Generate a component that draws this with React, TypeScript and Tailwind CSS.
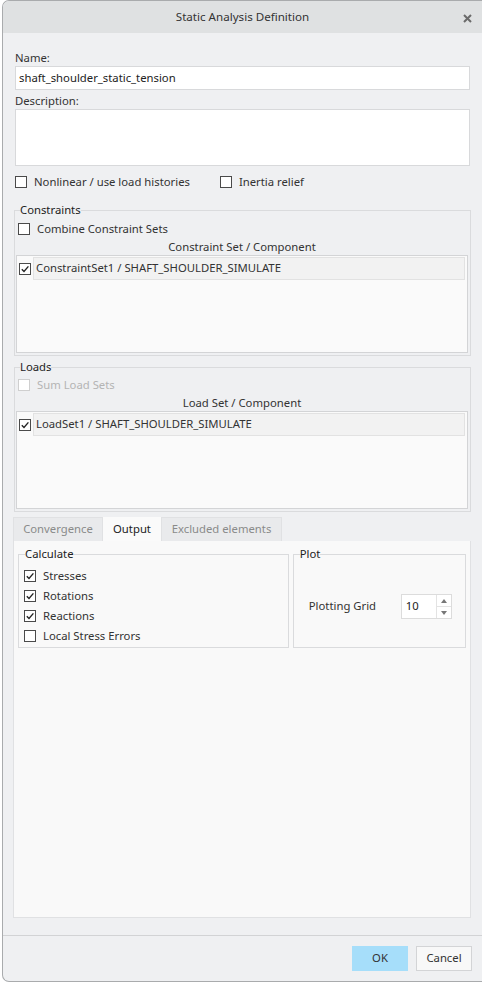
import type { ReactNode } from "react";

const font = { fontFamily: '"Noto Sans", "Open Sans", sans-serif' };

function Check({ checked, disabled }: { checked?: boolean; disabled?: boolean }) {
  return (
    <span
      className={[
        "flex h-[12px] w-[12px] shrink-0 items-center justify-center border bg-white",
        disabled ? "border-[#cfcfcf] bg-[#f3f3f3]" : "border-[#4a4a4a]",
      ].join(" ")}
    >
      {checked ? (
        <svg width="10" height="10" viewBox="0 0 10 10">
          <path d="M1.8 5.2 L4 7.4 L8.4 2.4" fill="none" stroke="#222" strokeWidth="1.4" />
        </svg>
      ) : null}
    </span>
  );
}

function CheckRow({
  label,
  checked,
  disabled,
  className = "",
}: {
  label: string;
  checked?: boolean;
  disabled?: boolean;
  className?: string;
}) {
  return (
    <div className={`flex h-[20px] items-center gap-[7px] ${className}`}>
      <Check checked={checked} disabled={disabled} />
      <span className={disabled ? "text-[#b4b4b4]" : "text-[#333]"}>{label}</span>
    </div>
  );
}

function Group({
  title,
  className = "",
  children,
}: {
  title: string;
  className?: string;
  children: ReactNode;
}) {
  return (
    <fieldset className={`border border-[#dadbdd] ${className}`}>
      <legend className="ml-[4px] leading-[16px] text-[#222]">{title}</legend>
      {children}
    </fieldset>
  );
}

function SetList({ header, row }: { header: string; row: string }) {
  return (
    <>
      <div className="flex h-[16px] items-center justify-center text-[#333]">{header}</div>
      <div className="h-[98px] border border-[#d3d4d6] bg-[#fafafa] px-[2px] pt-[1px]">
        <div className="flex items-center gap-[2px]">
          <Check checked />
          <div className="flex h-[23px] flex-1 items-center border border-[#e2e2e2] bg-[#f2f2f2] pl-[2px] text-[#333]">
            {row}
          </div>
        </div>
      </div>
    </>
  );
}

export default function App() {
  return (
    <div className="flex h-[983px] w-[482px] bg-white pl-[2px] text-[11.3px]" style={font}>
      <div className="flex h-[982px] flex-1 flex-col overflow-hidden rounded-l-[7px] border-y border-l border-[#a9abad] bg-[#eff0f2]">
        <div className="relative flex h-[32px] shrink-0 items-center justify-center bg-[#dfe1e2] text-[11.6px] text-[#333]">
          Static Analysis Definition
          <svg className="absolute right-[10px] top-[13px]" width="9" height="9" viewBox="0 0 9 9">
            <path d="M1 1 L8 8 M8 1 L1 8" stroke="#6b6b6b" strokeWidth="2" />
          </svg>
        </div>

        <div className="flex flex-1 flex-col pb-[17px] pl-[12px] pr-[12px]">
          <div className="mt-[17px] h-[16px] leading-[16px] text-[#333]">Name:</div>
          <div className="flex h-[24px] items-center border border-[#d8d9db] bg-white px-[3px] text-[#222]">
            shaft_shoulder_static_tension
          </div>
          <div className="mt-[3px] h-[16px] leading-[16px] text-[#333]">Description:</div>
          <div className="h-[57px] border border-[#d8d9db] bg-white" />

          <div className="mt-[6px] flex h-[20px] items-center">
            <CheckRow label="Nonlinear / use load histories" />
            <CheckRow label="Inertia relief" className="ml-[30px]" />
          </div>

          <Group title="Constraints" className="mt-[10px] ml-[-1px] mr-[-1px] pb-[2px] pl-[1px] pr-[2px]">
            <CheckRow label="Combine Constraint Sets" className="ml-[2px] mt-[1px]" />
            <SetList header="Constraint Set / Component" row="ConstraintSet1 / SHAFT_SHOULDER_SIMULATE" />
          </Group>

          <Group title="Loads" className="mt-[3px] ml-[-1px] mr-[-1px] pb-[2px] pl-[1px] pr-[2px]">
            <CheckRow label="Sum Load Sets" disabled className="ml-[2px]" />
            <SetList header="Load Set / Component" row="LoadSet1 / SHAFT_SHOULDER_SIMULATE" />
          </Group>

          <div className="mt-[5px] ml-[-2px] mr-[-1px] flex h-[24px] items-end">
            <div className="flex h-[24px] w-[90px] items-center justify-center border border-b-0 border-[#e0e1e3] bg-[#e9eaec] text-[#8a8a8a]">
              Convergence
            </div>
            <div className="flex h-[24px] w-[58px] items-center justify-center bg-[#fafafa] text-[#222]">
              Output
            </div>
            <div className="flex h-[24px] w-[121px] items-center justify-center border border-b-0 border-[#e0e1e3] bg-[#e9eaec] text-[#8a8a8a]">
              Excluded elements
            </div>
          </div>
          <div className="ml-[-2px] mr-[-1px] flex flex-1 items-start gap-[4px] border border-t-0 border-[#e0e1e3] bg-[#f9f9f9] px-[4px] pt-[5px]">
            <Group title="Calculate" className="h-[102px] w-[272px] px-[2px]">
              <CheckRow label="Stresses" checked className="ml-[3px] mt-[4px]" />
              <CheckRow label="Rotations" checked className="ml-[3px]" />
              <CheckRow label="Reactions" checked className="ml-[3px]" />
              <CheckRow label="Local Stress Errors" className="ml-[3px]" />
            </Group>
            <Group title="Plot" className="h-[102px] w-[174px] pl-[2px]">
              <div className="ml-[13px] mt-[32px] flex items-center">
                <span className="w-[92px] text-[#333]">Plotting Grid</span>
                <div className="flex h-[25px] w-[51px] border border-[#dcdcdc] bg-white">
                  <div className="flex flex-1 items-center pl-[4px] text-[#222]">10</div>
                  <div className="flex w-[15px] flex-col border-l border-[#e3e3e3]">
                    <div className="flex flex-1 items-center justify-center border-b border-[#e3e3e3]">
                      <svg width="6" height="4" viewBox="0 0 6 4">
                        <path d="M0 4 L3 0 L6 4 Z" fill="#777" />
                      </svg>
                    </div>
                    <div className="flex flex-1 items-center justify-center">
                      <svg width="6" height="4" viewBox="0 0 6 4">
                        <path d="M0 0 L3 4 L6 0 Z" fill="#777" />
                      </svg>
                    </div>
                  </div>
                </div>
              </div>
            </Group>
          </div>
        </div>

        <div className="flex h-[46px] shrink-0 items-start justify-end gap-[8px] border-t border-[#d2d3d5] pr-[10px] pt-[10px]">
          <div className="flex h-[25px] w-[56px] items-center justify-center bg-[#a6defa] text-[#333]">OK</div>
          <div className="flex h-[25px] w-[56px] items-center justify-center border border-[#d3d4d6] bg-[#f8f8f8] text-[#333]">
            Cancel
          </div>
        </div>
      </div>
    </div>
  );
}
